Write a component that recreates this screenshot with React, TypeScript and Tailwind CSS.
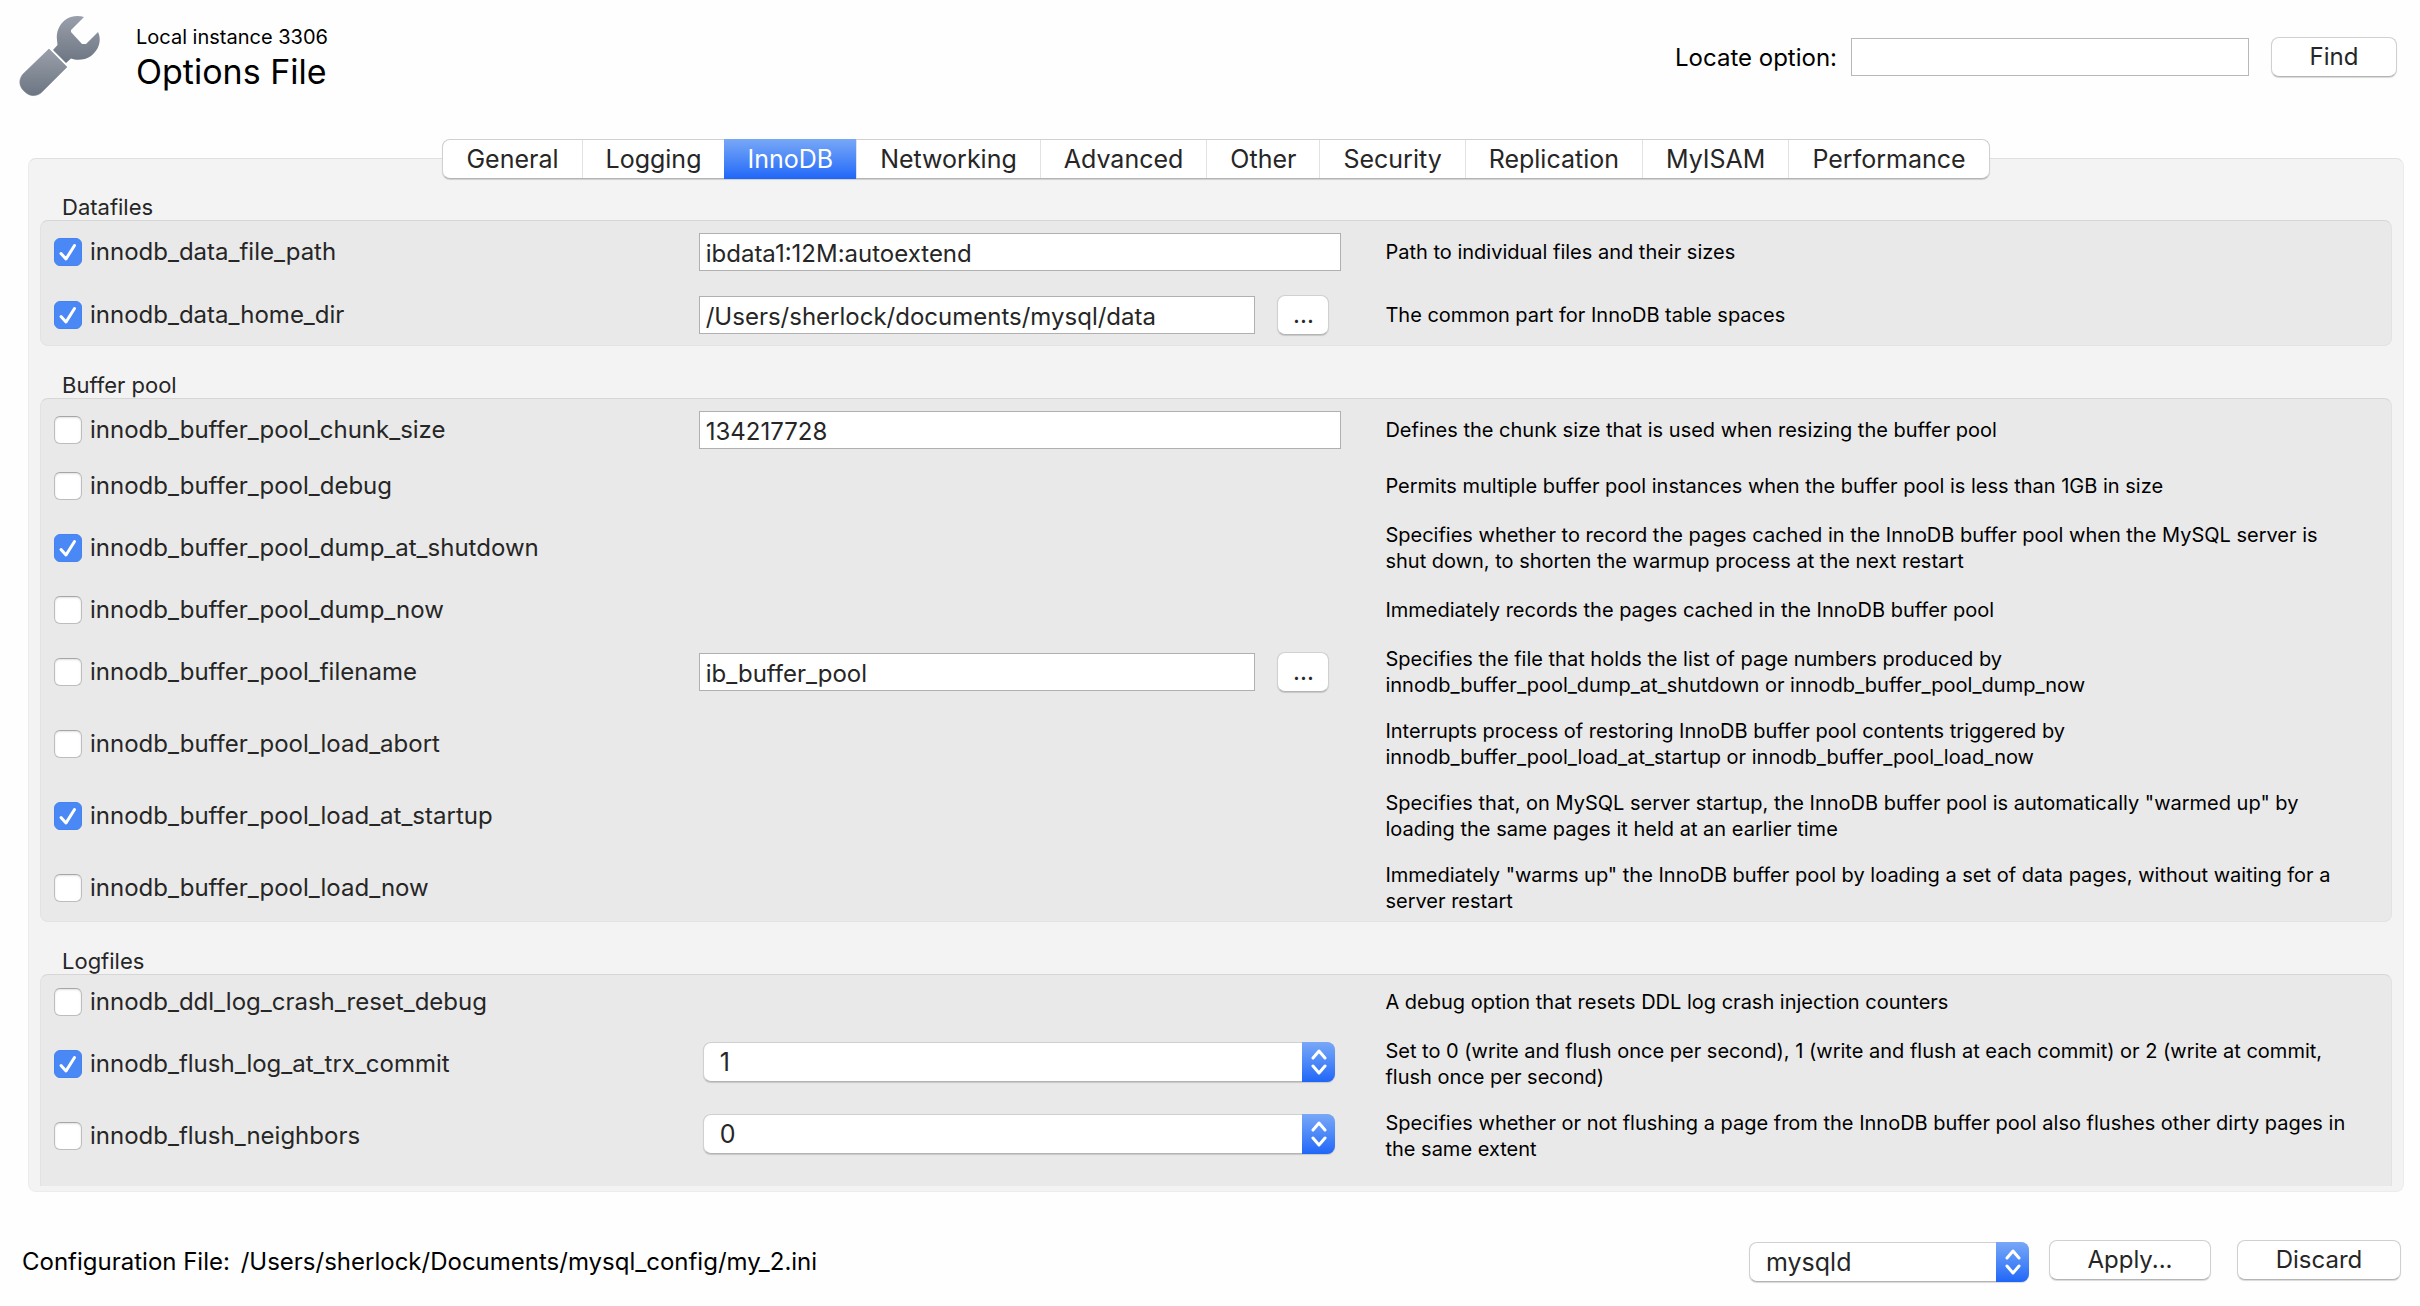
import React from "react";

type Control =
  | { kind: "text"; value: string; browse?: boolean }
  | { kind: "select"; value: string; choices: string[] };

type Option = { name: string; checked?: boolean; control?: Control; help: string };

const groups: { title: string; options: Option[] }[] = [
  {
    title: "Datafiles",
    options: [
      {
        name: "innodb_data_file_path",
        checked: true,
        control: { kind: "text", value: "ibdata1:12M:autoextend" },
        help: "Path to individual files and their sizes",
      },
      {
        name: "innodb_data_home_dir",
        checked: true,
        control: { kind: "text", value: "/Users/sherlock/documents/mysql/data", browse: true },
        help: "The common part for InnoDB table spaces",
      },
    ],
  },
  {
    title: "Buffer pool",
    options: [
      {
        name: "innodb_buffer_pool_chunk_size",
        control: { kind: "text", value: "134217728" },
        help: "Defines the chunk size that is used when resizing the buffer pool",
      },
      {
        name: "innodb_buffer_pool_debug",
        help: "Permits multiple buffer pool instances when the buffer pool is less than 1GB in size",
      },
      {
        name: "innodb_buffer_pool_dump_at_shutdown",
        checked: true,
        help: "Specifies whether to record the pages cached in the InnoDB buffer pool when the MySQL server is shut down, to shorten the warmup process at the next restart",
      },
      {
        name: "innodb_buffer_pool_dump_now",
        help: "Immediately records the pages cached in the InnoDB buffer pool",
      },
      {
        name: "innodb_buffer_pool_filename",
        control: { kind: "text", value: "ib_buffer_pool", browse: true },
        help: "Specifies the file that holds the list of page numbers produced by innodb_buffer_pool_dump_at_shutdown or innodb_buffer_pool_dump_now",
      },
      {
        name: "innodb_buffer_pool_load_abort",
        help: "Interrupts process of restoring InnoDB buffer pool contents triggered by innodb_buffer_pool_load_at_startup or innodb_buffer_pool_load_now",
      },
      {
        name: "innodb_buffer_pool_load_at_startup",
        checked: true,
        help: 'Specifies that, on MySQL server startup, the InnoDB buffer pool is automatically "warmed up" by loading the same pages it held at an earlier time',
      },
      {
        name: "innodb_buffer_pool_load_now",
        help: 'Immediately "warms up" the InnoDB buffer pool by loading a set of data pages, without waiting for a server restart',
      },
    ],
  },
  {
    title: "Logfiles",
    options: [
      {
        name: "innodb_ddl_log_crash_reset_debug",
        help: "A debug option that resets DDL log crash injection counters",
      },
      {
        name: "innodb_flush_log_at_trx_commit",
        checked: true,
        control: { kind: "select", value: "1", choices: ["0", "1", "2"] },
        help: "Set to 0 (write and flush once per second), 1 (write and flush at each commit) or 2 (write at commit, flush once per second)",
      },
      {
        name: "innodb_flush_neighbors",
        control: { kind: "select", value: "0", choices: ["0", "1", "2"] },
        help: "Specifies whether or not flushing a page from the InnoDB buffer pool also flushes other dirty pages in the same extent",
      },
    ],
  },
];

const tabs = [
  "General",
  "Logging",
  "InnoDB",
  "Networking",
  "Advanced",
  "Other",
  "Security",
  "Replication",
  "MyISAM",
  "Performance",
];

const raised =
  "border border-[#d0d0d0] border-b-[#b4b4b4] bg-white shadow-[0_1px_1px_rgba(0,0,0,0.15)]";

function WrenchIcon() {
  return (
    <svg viewBox="0 0 84 84" className="size-[84px] shrink-0" aria-hidden="true">
      <defs>
        <linearGradient id="wrench" x1="0" y1="0" x2="0" y2="1">
          <stop offset="0" stopColor="#9aa0ab" />
          <stop offset="1" stopColor="#6c7582" />
        </linearGradient>
      </defs>
      <path
        d="M66 3C60 1 52 2 47 6C41 11 38 18 39 26L39.500 31L35 36L48 49L53 44.500C59 47 67 46 73 42C81 36 84 26 80 18L68 30H64L53 18V16Z"
        fill="url(#wrench)"
      />
      <path
        d="M31 35L49 53L25 77C20 83 12 83 7 78C1 73 0 66 5 60Z"
        fill="url(#wrench)"
        stroke="#7f8792"
        strokeWidth="0.5"
      />
    </svg>
  );
}

function Checkbox({ id, checked }: { id: string; checked?: boolean }) {
  return (
    <span className="relative flex size-7 shrink-0">
      <input
        id={id}
        type="checkbox"
        defaultChecked={checked}
        className="peer size-7 appearance-none rounded-md border border-[#bdbdbd] border-t-[#a6a6a6] bg-white shadow-[inset_0_1px_2px_rgba(0,0,0,0.12)] checked:border-[#4483f0] checked:bg-[#4a88f6] checked:shadow-none"
      />
      <svg
        viewBox="0 0 28 28"
        aria-hidden="true"
        className="pointer-events-none absolute inset-0 hidden size-7 peer-checked:block"
      >
        <path
          d="M7 15.500L12 21L20.500 7.500"
          fill="none"
          stroke="#fff"
          strokeWidth="3"
          strokeLinecap="round"
          strokeLinejoin="round"
        />
      </svg>
    </span>
  );
}

function Select({
  id,
  label,
  value,
  choices,
}: {
  id: string;
  label: string;
  value: string;
  choices: string[];
}) {
  return (
    <span className={`relative flex h-10 w-full rounded-lg ${raised}`}>
      <select
        id={id}
        aria-label={label}
        defaultValue={value}
        className="w-full appearance-none bg-transparent pl-4 text-[25px] leading-8 text-[#262626]"
      >
        {choices.map((c) => (
          <option key={c}>{c}</option>
        ))}
      </select>
      <span className="pointer-events-none absolute -inset-y-px -right-px flex w-[33px] items-center justify-center rounded-r-lg bg-linear-to-b from-[#78a7f6] to-[#1f66f8]">
        <svg viewBox="0 0 16 26" className="h-[26px] w-4" aria-hidden="true">
          <path
            d="M2 9l6-7 6 7M2 17l6 7 6-7"
            fill="none"
            stroke="#fff"
            strokeWidth="3"
            strokeLinecap="round"
            strokeLinejoin="round"
          />
        </svg>
      </span>
    </span>
  );
}

function PushButton({ children, className }: { children: string; className: string }) {
  return (
    <button
      type="button"
      className={`h-10 shrink-0 rounded-lg text-center text-2xl leading-8 text-[#262626] ${raised} ${className}`}
    >
      {children}
    </button>
  );
}

function OptionRow({ option }: { option: Option }) {
  const { name, checked, control, help } = option;
  return (
    <div className="grid grid-cols-[645fr_687fr_988fr] items-center">
      <div className="flex items-center gap-2">
        <Checkbox id={name} checked={checked} />
        <label htmlFor={name} className="text-2xl leading-8 text-[#262626]">
          {name}
        </label>
      </div>
      <div className="pr-11">
        {control?.kind === "text" && (
          <div className={control.browse ? "flex items-center gap-[22px] py-[3px] pr-3" : "flex py-px"}>
            <input
              type="text"
              aria-label={`${name} value`}
              defaultValue={control.value}
              className="h-[38px] w-full min-w-0 border border-[#b0b0b0] bg-white px-[6px] pt-0.5 text-2xl leading-8 text-[#262626]"
            />
            {control.browse && <PushButton className="w-[52px]">...</PushButton>}
          </div>
        )}
        {control?.kind === "select" && (
          <div className="flex pr-[6px] pb-1 pl-1">
            <Select
              id={`${name}_value`}
              label={`${name} value`}
              value={control.value}
              choices={control.choices}
            />
          </div>
        )}
      </div>
      <p className="pr-5 text-[20px] leading-[26px] text-black">{help}</p>
    </div>
  );
}

export default function App() {
  return (
    <div className="min-h-screen bg-[#fefefe] font-['Inter','Liberation_Sans',sans-serif] text-black">
      <header className="flex items-start justify-between pt-[14px] pr-[23px] pl-[18px]">
        <div className="flex items-start gap-[34px]">
          <WrenchIcon />
          <div className="pt-[10px]">
            <p className="text-[20px] leading-[26px]">Local instance 3306</p>
            <h1 className="text-[34px] leading-[44px]">Options File</h1>
          </div>
        </div>
        <div className="flex items-center pt-[23px]">
          <label htmlFor="locate" className="mr-[14px] pt-0.5 text-2xl leading-8">
            Locate option:
          </label>
          <input
            id="locate"
            type="text"
            className="mr-[22px] h-[38px] w-[398px] border border-[#b8b8b8] bg-white px-[6px] text-2xl"
          />
          <PushButton className="w-[126px]">Find</PushButton>
        </div>
      </header>

      <main className="mt-[41px] mr-4 ml-7">
        <nav
          role="tablist"
          className={`relative z-10 mx-auto -mb-[21px] flex h-10 w-fit rounded-lg ${raised}`}
        >
          {tabs.map((t) => (
            <button
              key={t}
              type="button"
              role="tab"
              aria-selected={t === "InnoDB"}
              className={
                t === "InnoDB"
                  ? "-my-px bg-linear-to-b from-[#78a7f6] to-[#1f66f8] px-[23px] text-[25px] leading-8 text-white"
                  : "border-[#e2e2e2] px-[23px] text-[25px] leading-8 text-[#262626] not-first:border-l"
              }
            >
              {t}
            </button>
          ))}
        </nav>
        <div className="rounded-lg border border-[#ececec] border-t-[#e0e0e0] bg-[#f3f3f3] px-[11px] pt-[35px] pb-[5px]">
          {groups.map((g) => (
            <section key={g.title} className="group">
              <h2 className="pl-[22px] text-[22px] leading-[26px] text-[#262626]">{g.title}</h2>
              <div className="mb-[26px] flex flex-col gap-5 rounded-lg border border-[#e2e2e2] border-t-[#d6d6d6] bg-[#e9e9e9] pt-[11px] pr-[18px] pb-[7px] pl-[13px] group-last:mb-0 group-last:rounded-b-none group-last:border-b-0 group-last:pb-6">
                {g.options.map((o) => (
                  <OptionRow key={o.name} option={o} />
                ))}
              </div>
            </section>
          ))}
        </div>
      </main>

      <footer className="mt-12 flex items-start pr-[19px] pb-5 pl-[22px]">
        <p className="mr-auto pt-[6px] text-2xl leading-8">
          Configuration File: <span className="ml-1">/Users/sherlock/Documents/mysql_config/my_2.ini</span>
        </p>
        <div className="mr-5 w-[280px] pt-0.5">
          <Select id="section" label="Configuration section" value="mysqld" choices={["mysqld"]} />
        </div>
        <PushButton className="mr-[26px] w-[162px]">Apply...</PushButton>
        <PushButton className="w-[164px]">Discard</PushButton>
      </footer>
    </div>
  );
}
